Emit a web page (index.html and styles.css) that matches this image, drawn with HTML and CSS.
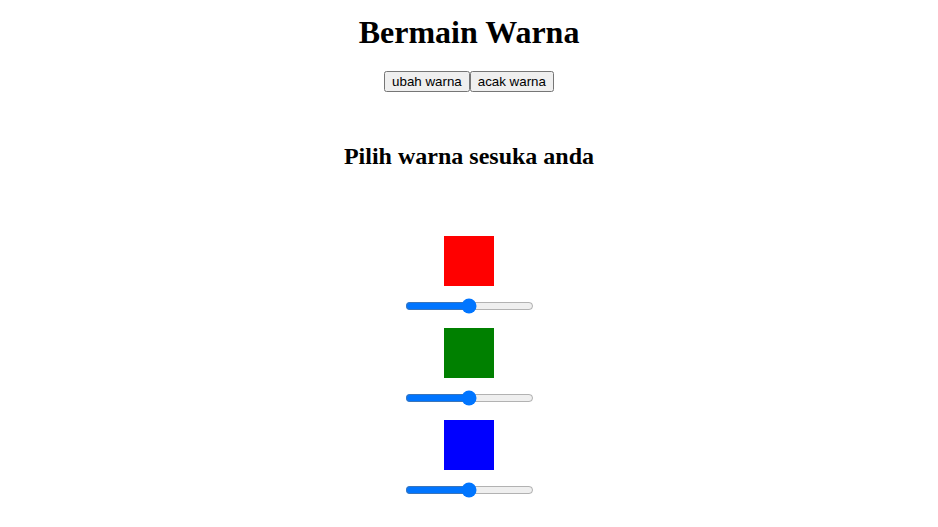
FILE: index.html
```html
<!DOCTYPE html>
<html>
<head>
<meta charset="utf-8">
<title>Bermain Warna</title>
<link rel="stylesheet" href="styles.css">
</head>
<body>
<h1 class="title">Bermain Warna</h1>
<div class="actions"><button class="btn">ubah warna</button><button class="btn">acak warna</button></div>
<h2 class="subtitle">Pilih warna sesuka anda</h2>
<div class="picker">
  <div class="item"><div class="swatch red"></div><input class="slider" type="range" min="0" max="100" value="50"></div>
  <div class="item"><div class="swatch green"></div><input class="slider" type="range" min="0" max="100" value="50"></div>
  <div class="item"><div class="swatch blue"></div><input class="slider" type="range" min="0" max="100" value="50"></div>
</div>
</body>
</html>
```
FILE: styles.css
```css
body {
  margin: 8px;
  font-family: "Liberation Serif", serif;
  text-align: center;
  color: #000;
  background: #fff;
}
.title {
  font-size: 32px;
  margin: 6px 0 20px;
}
.actions {
  display: flex;
  justify-content: center;
}
.btn {
  font-family: "Liberation Sans", Arial, sans-serif;
  font-size: 13.333px;
  margin: 0;
}
.subtitle {
  font-size: 24px;
  margin: 51px 0 66px;
}
.picker {
  display: flex;
  flex-direction: column;
  align-items: center;
}
.item {
  display: flex;
  flex-direction: column;
  align-items: center;
  margin-bottom: 14px;
}
.swatch {
  width: 50px;
  height: 50px;
}
.red { background: red; }
.green { background: green; }
.blue { background: blue; }
.slider {
  width: 129px;
  margin: 12px 2px 0;
}
```
